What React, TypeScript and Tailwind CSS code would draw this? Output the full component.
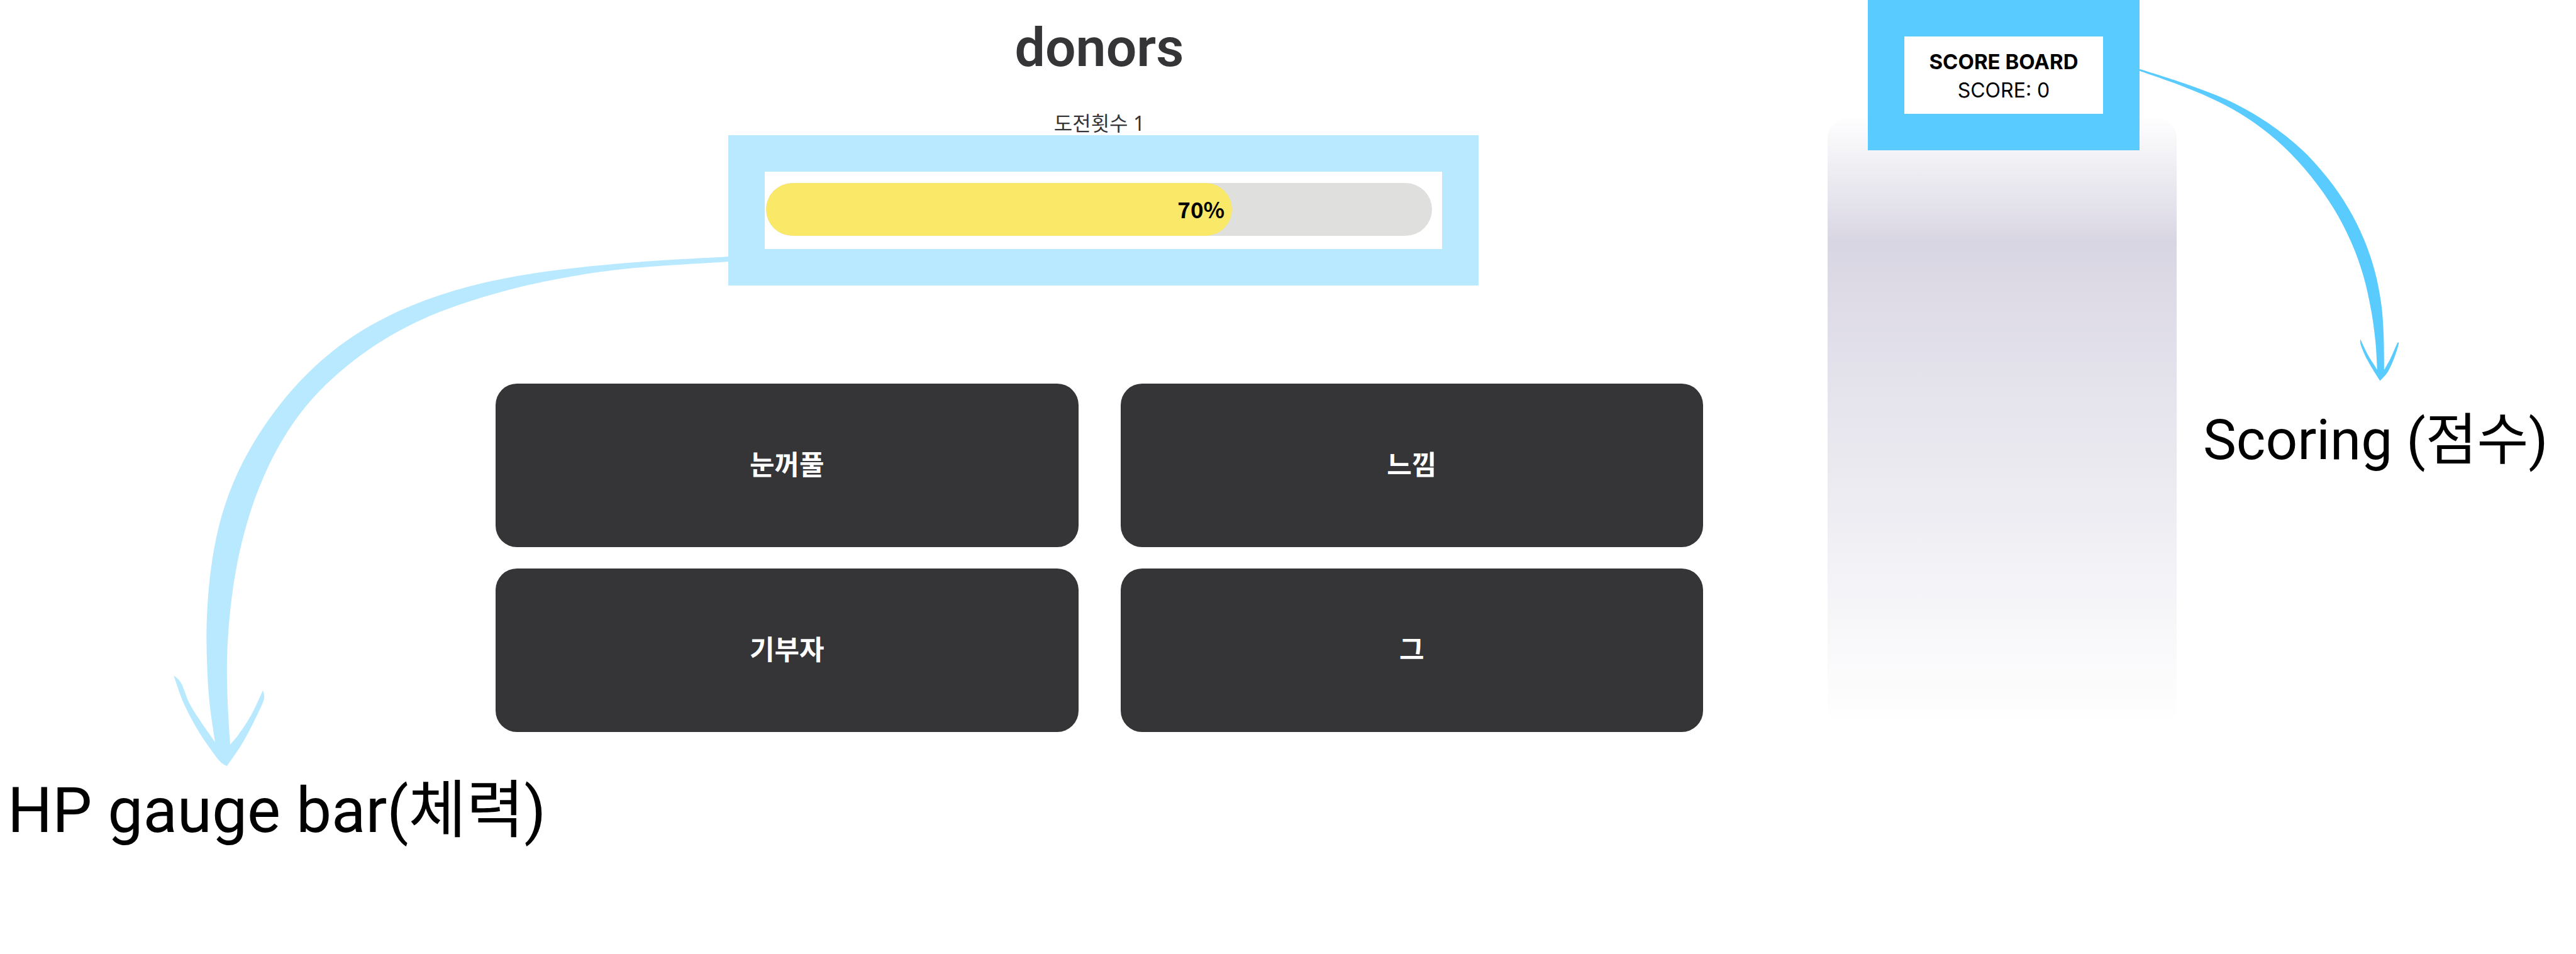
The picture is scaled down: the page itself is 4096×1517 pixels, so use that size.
type Point = [number, number];

/* Smooth curve through the points, continuing from the current pen position. */
function curve(points: Point[]): string {
  let d = "";
  for (let i = 0; i < points.length - 1; i++) {
    const p0 = points[Math.max(i - 1, 0)];
    const p1 = points[i];
    const p2 = points[i + 1];
    const p3 = points[Math.min(i + 2, points.length - 1)];
    d += `C${p1[0] + (p2[0] - p0[0]) / 6} ${p1[1] + (p2[1] - p0[1]) / 6} ${p2[0] - (p3[0] - p1[0]) / 6} ${p2[1] - (p3[1] - p1[1]) / 6} ${p2[0]} ${p2[1]}`;
  }
  return d;
}

/* Closed outline; each edge starts at the point where the last one ended. */
function outline(edges: Point[][]): string {
  const [x, y] = edges[0][0];
  return `M${x} ${y}${edges.map(curve).join("")}Z`;
}

const gaugeArrow = outline([
  [[1160, 408], [1010, 417], [874, 431], [768, 450], [683, 475], [611, 506], [548, 544], [492, 591], [443, 646], [401, 708], [370, 770], [348, 837], [335, 908], [329, 982], [329, 1049], [333, 1116], [342, 1180]],
  [[342, 1180], [319, 1147], [301, 1118], [288, 1086], [276, 1074]],
  [[276, 1074], [292, 1118], [314, 1160], [336, 1193], [351, 1212], [361, 1218]],
  [[361, 1218], [384, 1184], [402, 1151], [418, 1117], [420, 1106], [418, 1098]],
  [[418, 1098], [400, 1136], [380, 1167], [366, 1184]],
  [[366, 1184], [362, 1116], [361, 1049], [365, 982], [374, 913], [389, 845], [411, 778], [443, 710], [488, 644], [548, 585], [619, 535], [699, 496], [794, 465], [890, 443], [1000, 427], [1160, 416]],
]);

const scoreArrow = outline([
  [[3400, 109], [3480, 135], [3548, 162], [3607, 196], [3659, 237], [3701, 283], [3734, 331], [3759, 381], [3776, 431], [3786, 481], [3790, 530], [3791, 588]],
  [[3791, 588], [3801, 570], [3812, 545]],
  [[3812, 545], [3814, 547], [3807, 569], [3797, 591], [3785, 605]],
  [[3785, 605], [3782, 602], [3764, 572], [3754, 549], [3753, 539]],
  [[3753, 539], [3765, 564], [3780, 588]],
  [[3780, 588], [3777, 542], [3770, 492], [3758, 439], [3739, 386], [3711, 332], [3675, 281], [3632, 234], [3584, 195], [3532, 164], [3470, 137], [3400, 112]],
]);

function Arrows() {
  return (
    <svg viewBox="0 0 4096 1517" className="pointer-events-none absolute top-0 left-0 w-full" aria-hidden="true">
      <path d={gaugeArrow} fill="#b8e9ff" />
      <path d={scoreArrow} fill="#59cbff" />
    </svg>
  );
}

function Gauge({ value }: { value: number }) {
  return (
    <div className="mr-[357px] ml-[370px] border-[58px] border-[#b8e9ff] bg-white pt-[18px] pr-4 pb-[21px] pl-0.5">
      <div
        role="progressbar"
        aria-label="HP"
        aria-valuenow={value}
        aria-valuemin={0}
        aria-valuemax={100}
        className="h-[84px] overflow-hidden rounded-full bg-[#dfdfdd]"
      >
        <div
          className="flex h-full items-center justify-end rounded-full bg-[#fae968] pr-3 pb-1 font-['Noto_Sans_CJK_KR',sans-serif] text-[35px] leading-none font-bold text-black"
          style={{ width: `${value}%` }}
        >
          {value}%
        </div>
      </div>
    </div>
  );
}

const answers = ["눈꺼풀", "느낌", "기부자", "그"];

export default function App() {
  return (
    <div className="relative min-h-screen overflow-hidden bg-white text-black">
      <div className="grid grid-cols-[minmax(0,788fr)_minmax(0,1920fr)_minmax(0,198fr)_minmax(0,555fr)_minmax(0,635fr)]">
        <main className="col-start-2 pt-8 text-[#353537]">
          <h1 className="text-center font-['Roboto',sans-serif] text-[86px] leading-[88px] font-semibold">donors</h1>
          <p className="mt-[57px] text-center font-['Noto_Sans','Noto_Sans_CJK_KR',sans-serif] text-[32px] leading-[38px]">
            도전횟수 1
          </p>
          <Gauge value={70} />
          <div className="mt-[156px] grid grid-cols-2 gap-x-[67px] gap-y-[34px]">
            {answers.map((answer) => (
              <button
                key={answer}
                type="button"
                className="h-[260px] rounded-[34px] bg-[#353537] pb-2 font-['Noto_Sans_CJK_KR',sans-serif] text-[43px] font-bold text-white"
              >
                {answer}
              </button>
            ))}
          </div>
        </main>

        <aside className="col-start-4 flex flex-col">
          <div className="relative z-10 ml-16 w-[432px] border-[58px] border-[#59cbff] bg-white px-2 pt-[18px] pb-[15px] text-center font-['Inter',sans-serif]">
            <h2 className="text-[33px] leading-[45px] font-bold whitespace-nowrap">SCORE BOARD</h2>
            <p className="text-[32px] leading-[45px]">SCORE: 0</p>
          </div>
          <div className="-mt-[51px] flex-1 rounded-t-[32px] bg-[linear-gradient(#fefeff_0%,#f3f2f6_6%,#d9d6e3_20%,#ffffff_99%)]" />
        </aside>

        <p className="col-start-5 pt-[650px] pl-[42px] font-['Roboto','Noto_Sans_CJK_KR',sans-serif] text-[89px] leading-[100px] whitespace-nowrap">
          Scoring (점수)
        </p>
      </div>
      <p className="mt-[75px] pl-3 font-['Roboto','Noto_Sans_CJK_KR',sans-serif] text-[100px] leading-[100px]">
        HP gauge bar(체력)
      </p>
      <Arrows />
    </div>
  );
}
